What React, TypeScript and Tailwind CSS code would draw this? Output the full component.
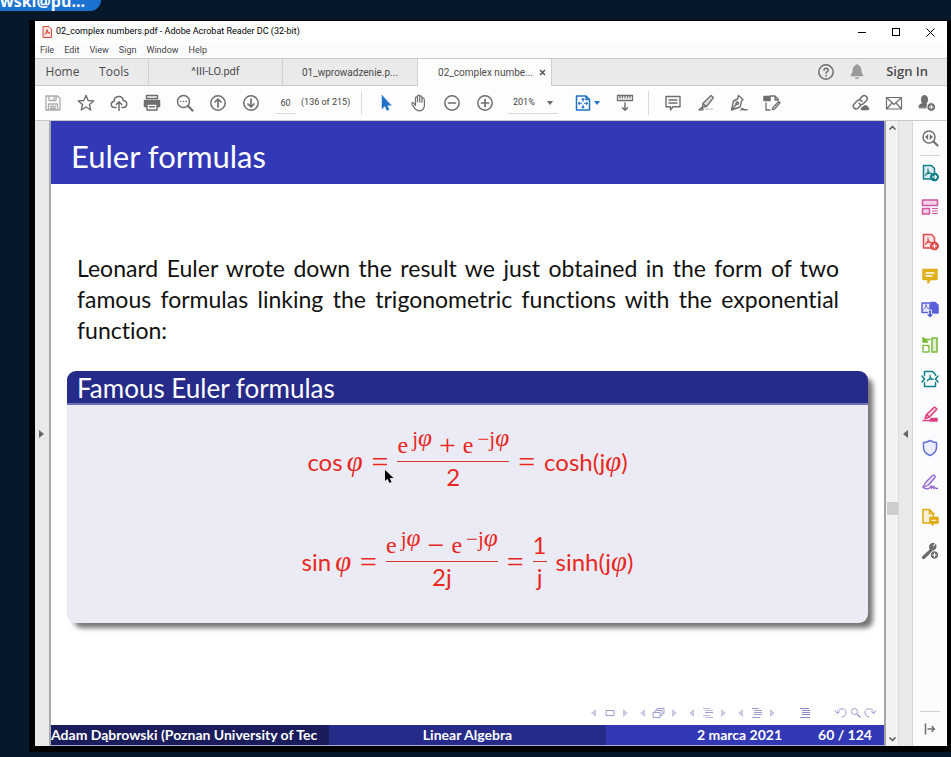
import type { ReactNode } from "react";

/* ---------- icon helpers ---------- */

type IconProps = { children: ReactNode; className?: string; size?: number; box?: string };

function Icon({ children, className = "text-[#6e6e6e]", size = 18, box = "0 0 18 18" }: IconProps) {
  return (
    <svg
      width={size}
      height={size}
      viewBox={box}
      fill="none"
      stroke="currentColor"
      strokeWidth="1.5"
      strokeLinecap="round"
      strokeLinejoin="round"
      className={`shrink-0 ${className}`}
      aria-hidden="true"
    >
      {children}
    </svg>
  );
}

function ToolButton({ label, children, width = "w-[33px]" }: { label: string; children: ReactNode; width?: string }) {
  return (
    <button type="button" aria-label={label} className={`flex h-8 shrink-0 items-center justify-center ${width}`}>
      {children}
    </button>
  );
}

/* Acrobat ribbon mark shared by the PDF icons */
const ribbon = "M7 5c.6 2-.5 5-2.600 6.200M7 5c-.2 2.500 1.500 4.500 4 4.800M5 10.200c1.500-1 4-1.300 6-.4";

function Separator() {
  return <div className="h-6 w-px shrink-0 bg-[#dcdcdc]" />;
}

/* ---------- window chrome ---------- */

function TitleBar() {
  return (
    <div className="flex h-[22px] items-center pl-[7px] font-['Roboto',sans-serif] text-[9px] text-black">
      <svg width="10" height="12" viewBox="0 0 10 12" aria-hidden="true" className="mr-1">
        <path d="M1 .5h6L9.500 3v8.500H1z" fill="#fbe3e0" stroke="#d4483c" />
        <path d="M5 3.500c.3 2-1 4-2.500 5M5 3.500c0 2 1.500 3.500 3 3.700M3 7.500c1.500-.8 3-.9 4.800-.4" fill="none" stroke="#d4483c" />
      </svg>
      <h1>02_complex numbers.pdf - Adobe Acrobat Reader DC (32-bit)</h1>
      <div className="ml-auto flex">
        <button type="button" aria-label="Minimize" className="flex h-5 w-[34px] items-center justify-center">
          <span className="h-px w-2 bg-black" />
        </button>
        <button type="button" aria-label="Maximize" className="flex h-5 w-[34px] items-center justify-center">
          <span className="size-2 border border-black" />
        </button>
        <button type="button" aria-label="Close" className="flex h-5 w-[34px] items-center justify-center">
          <svg width="9" height="9" viewBox="0 0 9 9" stroke="#000" aria-hidden="true">
            <path d="M.5.5l8 8M8.500.5l-8 8" />
          </svg>
        </button>
      </div>
    </div>
  );
}

function MenuBar() {
  return (
    <nav className="flex h-[15px] items-center gap-[10px] bg-[#fcfcfe] pl-[5px] font-['Roboto',sans-serif] text-[9px] text-[#444]">
      {["File", "Edit", "View", "Sign", "Window", "Help"].map((item) => (
        <button type="button" key={item}>
          {item}
        </button>
      ))}
    </nav>
  );
}

function TabBar() {
  return (
    <div className="flex h-[28px] items-stretch border-y border-[#c9c9c9] bg-[#eaeaea] text-[12px] text-[#4b4b4b]">
      <button type="button" className="w-[55px]">Home</button>
      <button type="button" className="mr-[10px] w-[48px]">Tools</button>
      <button type="button" className="w-[134px] border-l border-[#d0d0d0] font-['Roboto',sans-serif] text-[11px]">^III-LO.pdf</button>
      <button type="button" className="w-[135px] border-l border-[#d0d0d0] font-['Roboto',sans-serif] text-[10px]">01_wprowadzenie.p...</button>
      <div className="-mb-px flex w-[135px] items-center justify-end border-x border-[#d0d0d0] bg-[#fdfdfe] font-['Roboto',sans-serif] text-[10px]">
        <button type="button" className="whitespace-nowrap">02_complex numbe...</button>
        <button type="button" aria-label="Close tab" className="mr-[5px] ml-[6px]">
          <svg width="7" height="7" viewBox="0 0 7 7" stroke="#555" strokeWidth="1.500" aria-hidden="true">
            <path d="M1 1l5 5M6 1l-5 5" />
          </svg>
        </button>
      </div>
      <div className="ml-auto flex items-center pr-[19px]">
        <button type="button" aria-label="Help">
          <Icon>
            <circle cx="9" cy="9" r="7.200" />
            <path d="M7 7.200c0-2.800 4.200-2.500 4.200 0 0 1.500-2.100 1.500-2.100 3M9.100 12.500v.4" />
          </Icon>
        </button>
        <button type="button" aria-label="Notifications" className="ml-[13px]">
          <Icon className="text-[#9b9b9b]" size={18}>
            <path d="M9 2.500c-4 0-3.500 4.500-4 7L3.500 12.500h11L13 9.500c-.5-2.500 0-7-4-7zM9 1.500v1M7.800 15h2.400" fill="currentColor" />
          </Icon>
        </button>
        <button type="button" className="ml-[20px] text-[13px] font-semibold">Sign In</button>
      </div>
    </div>
  );
}

function Toolbar() {
  return (
    <div className="flex h-[35px] items-center border-b border-[#c9c9c9] bg-[#fdfdfe] pl-px font-['Roboto',sans-serif] text-[9px] text-[#444]">
      <ToolButton label="Save">
        <Icon className="text-[#ababab]">
          <path d="M2 2h11.500L16 4.500V16H2zM5 2v4.500h7V2M4.500 16v-6h9v6M6.500 12.500h5M6.500 14.500h5M10 3.500v1.500" strokeWidth="1.300" />
        </Icon>
      </ToolButton>
      <ToolButton label="Star">
        <Icon>
          <path d="M9 1.300l2.100 5.200 5.600.4-4.300 3.600 1.400 5.500L9 13l-4.800 3 1.400-5.500L1.300 6.900l5.600-.4z" strokeWidth="1.300" />
        </Icon>
      </ToolButton>
      <ToolButton label="Upload">
        <Icon>
          <path d="M6 13.500H4.200c-4-.5-3.700-5.800-.2-6C4 1.500 12.500.8 13.200 6.500c4.800.3 4.500 6.800.3 7H12M9 16.500V8M6.300 10.500L9 7.800l2.700 2.700" />
        </Icon>
      </ToolButton>
      <ToolButton label="Print">
        <Icon>
          <path d="M3.500 1.500h11v3h-11z" />
          <path d="M1.500 6.500h15v6h-2v-3h-11v3h-2z" fill="currentColor" />
          <path d="M4 10h10v6H4zM6.500 12.800h5" />
        </Icon>
      </ToolButton>
      <ToolButton label="Find">
        <Icon>
          <circle cx="7.500" cy="7.500" r="6" />
          <path d="M12 12l4.500 4.500" strokeWidth="2.200" />
          <path d="M4.800 7.500h.1M7.500 7.500h.1M10.200 7.500h.1" />
        </Icon>
      </ToolButton>
      <ToolButton label="Previous page">
        <Icon>
          <circle cx="9" cy="9" r="7.200" />
          <path d="M9 13V5.500M6 8l3-3 3 3" strokeWidth="1.700" />
        </Icon>
      </ToolButton>
      <ToolButton label="Next page">
        <Icon>
          <circle cx="9" cy="9" r="7.200" />
          <path d="M9 5v7.500M6 10l3 3 3-3" strokeWidth="1.700" />
        </Icon>
      </ToolButton>
      <input
        aria-label="Page number"
        defaultValue="60"
        className="mr-[5px] ml-[8px] h-[21px] w-[21px] border-b border-[#dadada] bg-transparent text-center outline-none"
      />
      <span className="w-[60px] whitespace-nowrap">(136 of 215)</span>
      <Separator />
      <div className="w-[7px] shrink-0" />
      <ToolButton label="Select">
        <Icon className="text-[#2170c8]">
          <path d="M5 1.500v13.300l3-3 2 4.700 2-1-2-4.300h4z" fill="currentColor" strokeWidth="0.500" />
        </Icon>
      </ToolButton>
      <ToolButton label="Pan">
        <Icon>
          <path
            d="M5.500 11V4c0-1.500 2-1.500 2 0v4M7.500 7V2.300c0-1.500 2.200-1.500 2.200 0V8M9.700 7V3c0-1.500 2.200-1.500 2.200 0v5.500M11.900 8V4.800c0-1.400 2.200-1.400 2.200 0 .6 4 1.700 12-5.100 12-3.600 0-4.500-2.600-7-6.600-.6-1.300.8-2 1.700-1.100L5.500 11.500"
            strokeWidth="1.200"
          />
        </Icon>
      </ToolButton>
      <ToolButton label="Zoom out">
        <Icon>
          <circle cx="9" cy="9" r="7.200" />
          <path d="M5.500 9h7" strokeWidth="1.700" />
        </Icon>
      </ToolButton>
      <ToolButton label="Zoom in">
        <Icon>
          <circle cx="9" cy="9" r="7.200" />
          <path d="M5.500 9h7M9 5.500v7" strokeWidth="1.700" />
        </Icon>
      </ToolButton>
      <div className="relative ml-[7px] w-[50px] shrink-0">
        <select
          aria-label="Zoom level"
          className="h-[21px] w-full appearance-none border-b border-[#dadada] bg-transparent pl-[5px] outline-none"
        >
          <option>201%</option>
        </select>
        <span className="pointer-events-none absolute top-2 right-[5px] border-x-[3px] border-t-4 border-x-transparent border-t-[#666]" />
      </div>
      <button type="button" aria-label="Fit page" className="ml-[16px] flex shrink-0 items-center gap-[2px]">
        <Icon className="text-[#2170c8]">
          <path d="M2.500 2h9.500l3.500 3.500V16h-13zM12 2v3.500h3.500" />
          <path d="M9 4.500v3M9 14v-3M4.500 9.300h3M13.500 9.300h-3M8 5.500l1-1 1 1M8 13l1 1 1-1M5.500 8.300l-1 1 1 1M12.500 8.300l1 1-1 1" strokeWidth="1.100" />
        </Icon>
        <span className="border-x-[3px] border-t-4 border-x-transparent border-t-[#2170c8]" />
      </button>
      <div className="w-[8px] shrink-0" />
      <ToolButton label="Reading mode">
        <Icon>
          <path d="M1.500 1.500h15v5h-15zM4 2v2M6.500 2v2M9 2v2M11.500 2v2M14 2v2" strokeWidth="1.300" />
          <path d="M9 9v7M6.500 13.800L9 16.300l2.500-2.500" />
        </Icon>
      </ToolButton>
      <div className="w-[7px] shrink-0" />
      <Separator />
      <div className="w-[7px] shrink-0" />
      <ToolButton label="Comment">
        <Icon>
          <path d="M2 2.500h14v10.300H9L6.500 16v-3.200H2zM5 6h8M5 9h8" strokeWidth="1.400" />
        </Icon>
      </ToolButton>
      <ToolButton label="Highlight">
        <Icon>
          <path d="M9 14h7v2H7z" fill="#ddd" stroke="none" />
          <path d="M14 1.500l2.500 2L9.500 12.500 5.500 13 5.800 9.500zM5.800 9.500l3.700 3M5.300 13L2 15.800h4z" fill="#dedede" strokeWidth="1.300" />
        </Icon>
      </ToolButton>
      <ToolButton label="Sign">
        <Icon>
          <path d="M8.500 1.500l4.500 4-1.500 1.500-1.500 6L1.500 16 3.500 7l4-2zM2 15.500l4.500-5.500M11 16c1-2 2-2 1.700-.3 1.300-1 1.300-.5 1.300 0h3" strokeWidth="1.400" />
          <circle cx="7.200" cy="9.300" r="1.200" />
        </Icon>
      </ToolButton>
      <ToolButton label="Edit PDF">
        <Icon>
          <path d="M1 2.500h6v4H1z" fill="currentColor" />
          <path d="M7 2h5l3.500 3.500M12 2v4h3M3 9v7h4M15.800 7.500l1.200 1.300-5.600 6.400-2 .5.500-2z" strokeWidth="1.300" />
        </Icon>
      </ToolButton>
      <div className="ml-auto flex pr-[4px]">
        <ToolButton label="Share link">
          <Icon>
            <path d="M7.500 5.500l2.700-3C12.500.2 17 3 14.500 6.500L11 10C9.500 11 7.700 10.500 7 9M9 11l-3 3.200C3.500 16.500-.3 13 2 10.200L5 7c1.500-1.500 3.800-1.200 5 .5" />
            <path d="M9.500 15.500c0-2.500 2-2 2.500-3 2-1.500 3.500 0 3.200 1.200 1.500 0 1.800 1.800.8 1.800z" fill="currentColor" />
          </Icon>
        </ToolButton>
        <ToolButton label="Email">
          <Icon>
            <path d="M1.500 3.500h15v11.500h-15zM2 4l7 6.500L16 4M2 14.500l5-5.500M16 14.500L11 9" strokeWidth="1.200" />
          </Icon>
        </ToolButton>
        <ToolButton label="Add people">
          <Icon>
            <path d="M1 13.500c-.5-3 2-3.500 3.500-4C3 7.500 2.500 1.500 6.500 1.500S10 7.500 8.300 9.500l1 4z" fill="currentColor" strokeWidth="1" />
            <circle cx="13.300" cy="13" r="4.400" fill="currentColor" stroke="#fff" strokeWidth="1" />
            <path d="M11.500 13h3.600M13.300 11.200v3.600" stroke="#fff" strokeWidth="1" />
          </Icon>
        </ToolButton>
      </div>
    </div>
  );
}

/* ---------- slide ---------- */

const Phi = () => <i className="font-['Liberation_Serif',serif] text-[1.2em] leading-none">φ</i>;

/* Binary operators are set in the serif face, wider than the sans letters */
const Op = ({ children }: { children: string }) => (
  <span className="font-['Liberation_Serif',serif] text-[30px] leading-[30px]">{children}</span>
);

const Fn = ({ name }: { name: string }) => (
  <span className="flex items-baseline gap-1">
    {name}
    <Phi />
  </span>
);

function Fraction({ top, bottom }: { top: ReactNode; bottom: ReactNode }) {
  return (
    <span className="flex flex-col items-center leading-[30px]">
      <span className="flex h-[32px] self-stretch justify-center whitespace-nowrap border-b border-[#d8352c]">{top}</span>
      <span className="h-[31px]">{bottom}</span>
    </span>
  );
}

function Power({ negative = false }: { negative?: boolean }) {
  return (
    <span className="flex font-['Liberation_Serif',serif]">
      e
      <span className="-mt-[6px] ml-1 text-[21px]">
        {negative && "−"}j<Phi />
      </span>
    </span>
  );
}

function Formulas() {
  return (
    <div className="flex flex-col items-center gap-[37px] pt-[25px] text-[24px] text-[#e8281e]">
      <div className="flex items-center gap-[9px]">
        <Fn name="cos" />
        <Op>=</Op>
        <Fraction
          top={<span className="flex gap-[7px]"><Power /><Op>+</Op><Power negative /></span>}
          bottom="2"
        />
        <Op>=</Op>
        <span>cosh(j<Phi />)</span>
      </div>
      <div className="flex items-center gap-[9px]">
        <Fn name="sin" />
        <Op>=</Op>
        <Fraction
          top={<span className="flex gap-[7px]"><Power /><Op>−</Op><Power negative /></span>}
          bottom="2j"
        />
        <Op>=</Op>
        <Fraction top="1" bottom="j" />
        <span>sinh(j<Phi />)</span>
      </div>
    </div>
  );
}

function NavArrow({ left = false }: { left?: boolean }) {
  return (
    <svg width="5" height="8" viewBox="0 0 5 8" fill="#c9c9e6" aria-hidden="true">
      {left ? <path d="M5 0v8L0 4z" /> : <path d="M0 0v8l5-4z" />}
    </svg>
  );
}

function NavGroup({ label, children }: { label: string; children: ReactNode }) {
  return (
    <button type="button" aria-label={label} className="flex w-[37px] items-center justify-between">
      <NavArrow left />
      <svg width="14" height="12" viewBox="0 0 14 12" fill="none" stroke="#9c9ccf" aria-hidden="true">
        {children}
      </svg>
      <NavArrow />
    </button>
  );
}

function SlideNavigation() {
  return (
    <div className="mt-auto mb-[6px] flex items-center justify-end gap-[12px] pr-[7px]">
      <NavGroup label="Slide"><path d="M3 3.500h8v5H3z" /></NavGroup>
      <NavGroup label="Frame"><path d="M1 5.500h7v5H1zM3 5V3.500h7v5H8.500M5 3V1.500h7v5h-1.500" /></NavGroup>
      <NavGroup label="Subsection"><path d="M2 1.500h7M4 3.500h8M4 5.500h8M2 8.500h7M4 10.500h8" stroke="#bcbce0" /><path d="M4 5.500h8" /></NavGroup>
      <NavGroup label="Section"><path d="M2 1.500h7M4 3.500h8M4 5.500h8M4 7.500h8M2 10.500h8" /></NavGroup>
      <button type="button" aria-label="Document" className="mr-[10px] ml-[11px]">
        <svg width="14" height="12" viewBox="0 0 14 12" fill="none" stroke="#8a8ac6" aria-hidden="true">
          <path d="M2 1.500h9M4 3.500h8M4 5.500h8M4 7.500h8M2 10.500h10" />
        </svg>
      </button>
      <button type="button" aria-label="Back, search, forward">
        <svg width="43" height="12" viewBox="0 0 43 12" fill="none" stroke="#9c9ccf" aria-hidden="true">
          <path d="M1 3.500l2 3 3-2M3 6c1-6 10-5 9 0-.4 2.700-2.500 4-4.500 4" />
          <circle cx="20.500" cy="4.500" r="3" />
          <path d="M23 7l3.500 3.500" strokeWidth="1.500" />
          <path d="M42 3.500l-2 3-3-2M40 6c-1-6-10-5-9 0 .4 2.700 2.500 4 4.500 4" />
        </svg>
      </button>
    </div>
  );
}

function Slide() {
  return (
    <main className="flex min-w-0 flex-1 flex-col bg-white font-['Lato',sans-serif] [font-variant-ligatures:none]">
      <h2 className="flex h-[63px] items-center bg-[#3338b7] pl-5 pt-2 text-[31px] text-white">Euler formulas</h2>
      <p className="mt-[69px] pr-[45px] pl-[26px] text-[23px] leading-[31px] text-[#111]">
        <span className="block whitespace-nowrap [text-align-last:justify]">Leonard Euler wrote down the result we just obtained in the form of two</span>
        <span className="block whitespace-nowrap [text-align-last:justify]">famous formulas linking the trigonometric functions with the exponential</span>
        <span className="block">function:</span>
      </p>
      <section className="relative mt-[25px] mr-4 ml-4 h-[252px] rounded-[9px] bg-[#ebebf5] shadow-[6px_6px_5px_-1px_#777]">
        <h3 className="flex h-[34px] items-center rounded-t-[9px] border-b-2 border-[#6e6eb4] bg-[#262a88] pt-[2px] pl-[10px] text-[26px] text-white">
          Famous Euler formulas
        </h3>
        <Formulas />
        <svg className="absolute top-[99px] left-[318px]" width="9" height="14" viewBox="0 0 9 14" aria-hidden="true">
          <path d="M0 0v11l2.500-2.300L4.500 13l2-1-1.800-4H8.500z" fill="#000" />
        </svg>
      </section>
      <SlideNavigation />
      <footer className="grid h-[21px] grid-cols-3 items-stretch border-b border-[#a9acd8] text-[14px] leading-5 font-bold whitespace-nowrap text-white">
        <span className="overflow-hidden bg-[#1a1c5c]">Adam Dąbrowski (Poznan University of Tec</span>
        <span className="bg-[#262a88] text-center">Linear Algebra</span>
        <span className="flex justify-end gap-[36px] bg-[#3338b7] pr-3">
          <span>2 marca 2021</span>
          <span>60 / 124</span>
        </span>
      </footer>
    </main>
  );
}

/* ---------- right-hand tool pane ---------- */

function PdfPage() {
  return (
    <>
      <path d="M2.500 1.500h8l3 3V15h-11z" fill="currentColor" fillOpacity="0.15" />
      <path d={ribbon} strokeWidth="1.100" />
    </>
  );
}

const tools: { label: string; color: string; art: ReactNode }[] = [
  {
    label: "Export PDF",
    color: "text-[#12808a]",
    art: <><PdfPage /><circle cx="13.500" cy="13" r="4" fill="currentColor" strokeWidth="1" /><path d="M11.500 13h4M14 11.500l1.500 1.500-1.500 1.500" stroke="#fff" strokeWidth="1.100" /></>,
  },
  {
    label: "Edit PDF",
    color: "text-[#d2559f]",
    art: <><path d="M1.500 2h15v5.500h-15zM1.500 10.500h7V16h-7z" fill="currentColor" fillOpacity="0.25" /><path d="M11.500 10.500h5M11.500 13h5M11.500 15.500h5" strokeWidth="1" /></>,
  },
  {
    label: "Create PDF",
    color: "text-[#e04a48]",
    art: <><PdfPage /><circle cx="13.500" cy="13" r="4" fill="currentColor" strokeWidth="1" /><path d="M11.500 13h4M13.500 11v4" stroke="#fff" strokeWidth="1.200" /></>,
  },
  {
    label: "Comment",
    color: "text-[#dfb01c]",
    art: <><path d="M2 2.500h14v10H9.500L7 16v-3.500H2z" fill="currentColor" /><path d="M5 6h8M5 9h6" stroke="#fff" strokeWidth="1.300" /></>,
  },
  {
    label: "Combine files",
    color: "text-[#5b5fdc]",
    art: <><path d="M10 1.500h4l3 2.500v8h-7z" fill="currentColor" /><path d="M1 2h8v9.500H1z" fill="#e8e8fb" /><path d="M5 4c0 2-1 3.500-2.500 4.500M5 4c0 2 1 3 2.500 3.500" strokeWidth="1" /><path d="M7.500 9h3v4h2.500L9 17l-4-4h2.500z" fill="currentColor" stroke="#fff" strokeWidth="0.800" /></>,
  },
  {
    label: "Organize pages",
    color: "text-[#78b833]",
    art: <><path d="M11 2h5v14h-5z" fill="currentColor" fillOpacity="0.2" /><path d="M2 9.500h6V16H2z" strokeDasharray="2 1.500" /><path d="M9 3.500H4M2 1.500v4.500h4.500z" fill="currentColor" strokeWidth="1.300" /></>,
  },
  {
    label: "Compress PDF",
    color: "text-[#12808a]",
    art: <><path d="M3.500 5.500v-4h8l3 3v1M3.500 12.500v4h11v-4" /><path d="M1 6l2.500 3L1 12M17 6l-2.500 3 2.500 3" /><path d="M9 5c.4 2-.8 4.500-2.800 6M9 5c0 2.500 1.500 4 3.500 4.500M6.500 10c1.500-.8 3.500-1 5.500-.5" strokeWidth="1.100" /></>,
  },
  {
    label: "Redact",
    color: "text-[#dc3f80]",
    art: <><path d="M13.500 2L16 4 8.500 12 4 13.500 5.500 9.500zM5.500 9.500l3 2.500" fill="currentColor" fillOpacity="0.2" /><path d="M2 15.500h14M10 13.500h6v2.500h-7z" fill="currentColor" /></>,
  },
  {
    label: "Protect",
    color: "text-[#5f6fd8]",
    art: <path d="M9 1.500c2 1.300 4 2 6.500 2v5c0 4-3 6.500-6.500 8-3.500-1.500-6.500-4-6.500-8v-5c2.500 0 4.500-.7 6.500-2z" fill="currentColor" fillOpacity="0.1" />,
  },
  {
    label: "Fill & Sign",
    color: "text-[#8f62cf]",
    art: <path d="M2 14l3-5 6.500-6.500c2-1 3 0 2.500 2L7.500 12 2 14.500c3 2 6.500 1.500 7.500-.5.500-2 2-1 1 1.500 2-3 3-3 2.500 0 1.500-1.500 1.500 0 3.500 0" fill="currentColor" fillOpacity="0.15" strokeWidth="1.300" />,
  },
  {
    label: "Send for comments",
    color: "text-[#e0aa10]",
    art: <><path d="M2 1.500h6.500l4 4V15H2zM8.500 1.500v4h4" fill="currentColor" fillOpacity="0.15" /><path d="M9 9.500h8v5.500h-4l-1.500 2v-2H9z" fill="currentColor" /><path d="M11 12.300h4" stroke="#fff" strokeWidth="1" /></>,
  },
  {
    label: "More tools",
    color: "text-[#6b6b6b]",
    art: <><path d="M2.500 15.500L10 8.500" strokeWidth="3.200" /><path d="M14.700 2.800l-2.200 2.200-1.200-1.200 2-2.300C9.500.5 7.500 4 9 7c2 3 7.500.5 5.700-4.200z" fill="currentColor" strokeWidth="1" /><circle cx="13.500" cy="13" r="4.200" fill="currentColor" stroke="#fff" strokeWidth="1" /><path d="M11.800 13h3.400M13.500 11.300v3.400" stroke="#fff" strokeWidth="1.100" /></>,
  },
];

function ToolPane() {
  return (
    <aside className="flex w-[35px] shrink-0 flex-col items-center border-l border-[#d8d8d8] bg-[#fcfcfe]">
      <button type="button" aria-label="Search tools" className="flex h-[34px] items-center">
        <Icon>
          <circle cx="8" cy="8" r="6" />
          <path d="M12.500 12.500l4 4" strokeWidth="2.200" />
          <path d="M7.200 5v6L4 8zM8.800 5v6L12 8z" fill="currentColor" stroke="none" />
        </Icon>
      </button>
      <div className="h-px w-5 bg-[#d0d0d0]" />
      <div className="mt-[7px] flex h-[398px] flex-col justify-between">
        {tools.map((tool) => (
          <button type="button" key={tool.label} aria-label={tool.label} className="flex h-5 items-center">
            <Icon className={tool.color}>{tool.art}</Icon>
          </button>
        ))}
      </div>
      <div className="mt-auto h-px w-5 bg-[#d0d0d0]" />
      <button type="button" aria-label="Expand pane" className="flex h-[34px] items-center">
        <Icon size={12} box="0 0 12 12">
          <path d="M1.500 1v10M4 6h6.500M8 3.500L10.500 6 8 8.500" />
        </Icon>
      </button>
    </aside>
  );
}

function ScrollBar() {
  return (
    <div className="flex w-[14px] shrink-0 flex-col items-center border-l-2 border-[#a3a3a8] bg-[#f2f2f2] py-1">
      <svg width="7" height="5" viewBox="0 0 7 5" fill="none" stroke="#555" strokeWidth="1.500" aria-hidden="true">
        <path d="M.5 4.500l3-3 3 3" />
      </svg>
      <div className="mt-[372px] h-[13px] w-[11px] bg-[#cdcdcd]" />
      <svg className="mt-auto" width="7" height="5" viewBox="0 0 7 5" fill="none" stroke="#555" strokeWidth="1.500" aria-hidden="true">
        <path d="M.5.5l3 3 3-3" />
      </svg>
    </div>
  );
}

export default function App() {
  return (
    <div className="flex h-screen flex-col overflow-hidden bg-[#061829] pb-[5px] font-['Open_Sans','Noto_Sans',sans-serif]">
      <div className="h-5 shrink-0">
        <div className="flex h-[11px] w-[101px] items-end overflow-hidden rounded-br-[11px] bg-[#1b72d0] text-[16px] font-bold text-white">
          <span className="leading-[20px]">wski@pu...</span>
        </div>
      </div>
      <div className="ml-[29px] flex min-h-0 flex-1 flex-col bg-black pt-px pr-1 pb-[6px] pl-[6px]">
        <div className="flex min-h-0 flex-1 flex-col bg-white">
          <TitleBar />
          <MenuBar />
          <TabBar />
          <Toolbar />
          <div className="flex min-h-0 flex-1">
            <button
              type="button"
              aria-label="Show navigation pane"
              className="flex w-4 shrink-0 items-center border-r-2 border-[#a9a9b0] bg-[#e9e9e9] pl-1"
            >
              <span className="border-y-4 border-l-[5px] border-y-transparent border-l-[#666]" />
            </button>
            <Slide />
            <ScrollBar />
            <button
              type="button"
              aria-label="Hide tool pane"
              className="flex w-[14px] shrink-0 items-center justify-center border-l border-[#dcdcdc] bg-[#e9e9e9]"
            >
              <span className="border-y-4 border-r-[5px] border-y-transparent border-r-[#666]" />
            </button>
            <ToolPane />
          </div>
        </div>
      </div>
    </div>
  );
}
